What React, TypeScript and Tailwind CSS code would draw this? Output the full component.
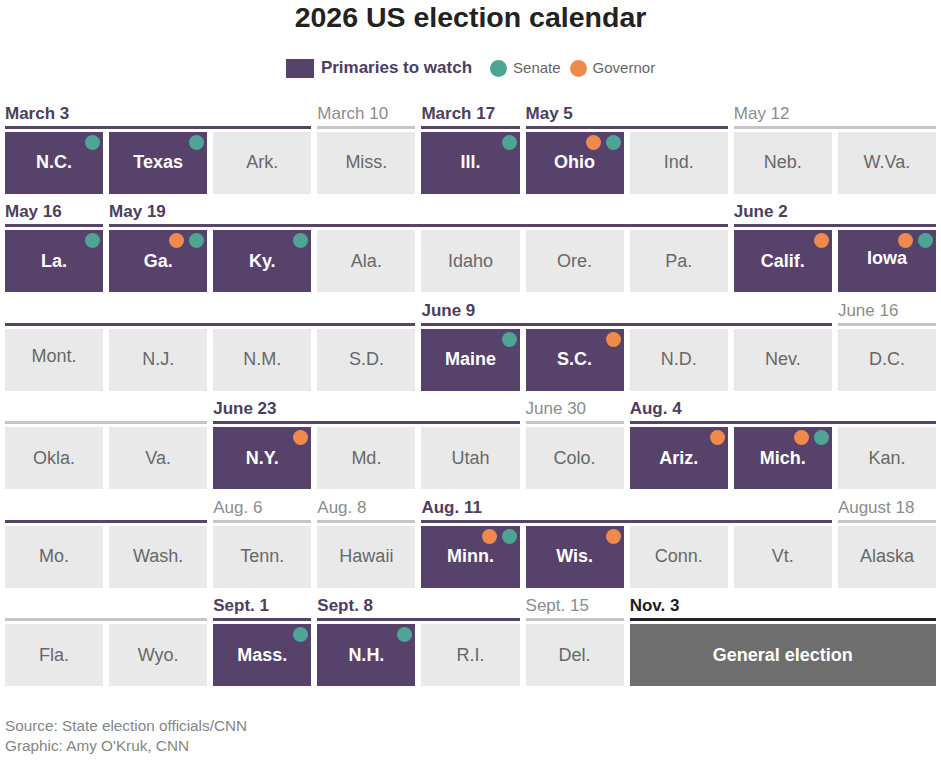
import React from 'react';

type Dot = 'g' | 's';
type Cell = { name: string; hot?: boolean; dots?: Dot[]; up?: boolean; wide?: boolean };
type Group = { label: string; tone: 'purple' | 'gray' | 'dark'; cells: Cell[] };

const P = (name: string, dots: Dot[] = [], up = false): Cell => ({ name, hot: true, dots, up });
const G = (name: string, up = false): Cell => ({ name, up });

const rows: Group[][] = [
  [
    { label: 'March 3', tone: 'purple', cells: [P('N.C.', ['s']), P('Texas', ['s']), G('Ark.')] },
    { label: 'March 10', tone: 'gray', cells: [G('Miss.')] },
    { label: 'March 17', tone: 'purple', cells: [P('Ill.', ['s'])] },
    { label: 'May 5', tone: 'purple', cells: [P('Ohio', ['g', 's']), G('Ind.')] },
    { label: 'May 12', tone: 'gray', cells: [G('Neb.'), G('W.Va.')] },
  ],
  [
    { label: 'May 16', tone: 'purple', cells: [P('La.', ['s'])] },
    {
      label: 'May 19',
      tone: 'purple',
      cells: [P('Ga.', ['g', 's']), P('Ky.', ['s']), G('Ala.'), G('Idaho'), G('Ore.'), G('Pa.')],
    },
    { label: 'June 2', tone: 'purple', cells: [P('Calif.', ['g']), P('Iowa', ['g', 's'], true)] },
  ],
  [
    { label: '', tone: 'purple', cells: [G('Mont.', true), G('N.J.'), G('N.M.'), G('S.D.')] },
    { label: 'June 9', tone: 'purple', cells: [P('Maine', ['s']), P('S.C.', ['g']), G('N.D.'), G('Nev.')] },
    { label: 'June 16', tone: 'gray', cells: [G('D.C.')] },
  ],
  [
    { label: '', tone: 'gray', cells: [G('Okla.'), G('Va.')] },
    { label: 'June 23', tone: 'purple', cells: [P('N.Y.', ['g']), G('Md.'), G('Utah')] },
    { label: 'June 30', tone: 'gray', cells: [G('Colo.')] },
    { label: 'Aug. 4', tone: 'purple', cells: [P('Ariz.', ['g']), P('Mich.', ['g', 's']), G('Kan.')] },
  ],
  [
    { label: '', tone: 'purple', cells: [G('Mo.'), G('Wash.')] },
    { label: 'Aug. 6', tone: 'gray', cells: [G('Tenn.')] },
    { label: 'Aug. 8', tone: 'gray', cells: [G('Hawaii')] },
    { label: 'Aug. 11', tone: 'purple', cells: [P('Minn.', ['g', 's']), P('Wis.', ['g']), G('Conn.'), G('Vt.')] },
    { label: 'August 18', tone: 'gray', cells: [G('Alaska')] },
  ],
  [
    { label: '', tone: 'gray', cells: [G('Fla.'), G('Wyo.')] },
    { label: 'Sept. 1', tone: 'purple', cells: [P('Mass.', ['s'])] },
    { label: 'Sept. 8', tone: 'purple', cells: [P('N.H.', ['s']), G('R.I.')] },
    { label: 'Sept. 15', tone: 'gray', cells: [G('Del.')] },
    { label: 'Nov. 3', tone: 'dark', cells: [{ name: 'General election', wide: true }] },
  ],
];

const span: Record<number, string> = {
  1: 'col-span-1',
  2: 'col-span-2',
  3: 'col-span-3',
  4: 'col-span-4',
  6: 'col-span-6',
};
const cols: Record<number, string> = {
  1: 'grid-cols-1',
  2: 'grid-cols-2',
  3: 'grid-cols-3',
  4: 'grid-cols-4',
  6: 'grid-cols-6',
};

const labelColor = { purple: 'text-[#4e3d5f]', gray: 'text-[#8c8c8c]', dark: 'text-[#1e1e1e]' };
const lineColor = { purple: 'bg-[#574468]', gray: 'bg-[#c6c6c6]', dark: 'bg-[#222222]' };

function StateCell({ cell }: { cell: Cell }) {
  if (cell.wide) {
    return (
      <div className="col-span-3 h-[62px] flex items-center justify-center bg-[#6e6e6e] text-white font-bold text-[18px]">
        {cell.name}
      </div>
    );
  }
  const bg = cell.hot ? 'bg-[#56426a] text-white font-bold' : 'bg-[#e9e9e9] text-[#686868]';
  return (
    <div className={`relative h-[62px] flex items-center justify-center text-[18px] ${bg}`}>
      <span className={cell.up ? '-mt-[6px]' : ''}>{cell.name}</span>
      {cell.dots && cell.dots.length > 0 && (
        // race markers sit in the top-right corner
        <div className="absolute top-[3px] right-[3px] flex gap-[5px]">
          {cell.dots.map(d => (
            <span
              key={d}
              className={`w-[15px] h-[15px] rounded-full ${d === 'g' ? 'bg-[#f08a4c]' : 'bg-[#4ea595]'}`}
            />
          ))}
        </div>
      )}
    </div>
  );
}

export default function App() {
  return (
    <div
      className="w-[941px] h-[764px] bg-white overflow-hidden"
      style={{ fontFamily: '"Liberation Sans", Arial, sans-serif' }}
    >
      <h1 className="h-[34px] text-center text-[28.5px] leading-[34px] font-bold text-[#222]">
        2026 US election calendar
      </h1>

      <div className="mt-[24px] h-[20px] flex items-center justify-center text-[15px]">
        <span className="w-[28px] h-[19px] bg-[#56426a]" />
        <span className="ml-[7px] text-[17px] font-bold text-[#4e3d5f]">Primaries to watch</span>
        <span className="ml-[18px] w-[17px] h-[17px] rounded-full bg-[#4ea595]" />
        <span className="ml-[6px] text-[#666]">Senate</span>
        <span className="ml-[9px] w-[17px] h-[17px] rounded-full bg-[#f08a4c]" />
        <span className="ml-[6px] text-[#666]">Governor</span>
      </div>

      <div className="mt-[25.5px] px-[5px] flex flex-col gap-y-[8.5px]">
        {rows.map((row, i) => (
          <div key={i} className="grid grid-cols-9 gap-x-[6px]">
            {row.map((g, j) => {
              const n = g.cells[0].wide ? 3 : g.cells.length;
              return (
                <div key={j} className={`${span[n]} flex flex-col`}>
                  <div className={`h-[20px] text-[17px] leading-[20px] font-bold whitespace-nowrap ${labelColor[g.tone]} ${g.tone === 'gray' ? 'font-normal' : ''}`}>
                    {g.label}
                  </div>
                  <div className={`mt-[2px] h-[3px] ${lineColor[g.tone]}`} />
                  <div className={`mt-[3px] grid ${cols[n]} gap-x-[6px]`}>
                    {g.cells.map(c => (
                      <StateCell key={c.name} cell={c} />
                    ))}
                  </div>
                </div>
              );
            })}
          </div>
        ))}
      </div>

      <div className="mt-[30px] px-[5px] text-[15.3px] leading-[20px] text-[#858585]">
        <div>Source: State election officials/CNN</div>
        <div>Graphic: Amy O'Kruk, CNN</div>
      </div>
    </div>
  );
}
